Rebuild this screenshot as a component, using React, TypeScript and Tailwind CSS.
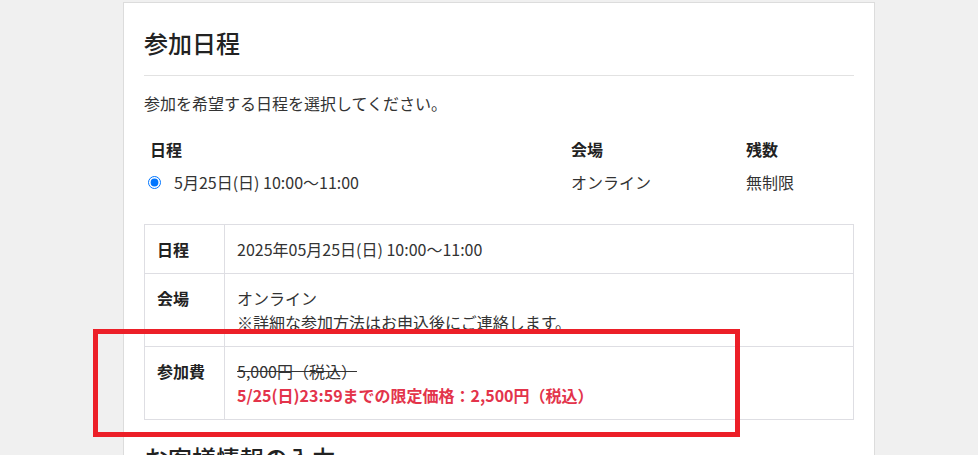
import React from "react";

const font = { fontFamily: '"Noto Sans CJK JP", "Noto Sans", sans-serif' };

export default function App() {
  return (
    <div className="relative h-[455px] w-[978px] overflow-hidden bg-[#f0f0f0]" style={font}>
      <div className="ml-[123px] mt-[2px] w-[752px] border border-[#dcdcdc] bg-white px-[20px] pt-[22px] text-[#333]">
        <h2 className="border-b border-[#e2e2e2] pb-[14px] text-[24px] leading-[36px] font-medium text-[#222]">
          参加日程
        </h2>
        <p className="mt-[15px] text-[16px] leading-[24px]">参加を希望する日程を選択してください。</p>

        <div className="mt-[22px] grid grid-cols-[421px_175px_1fr] text-[16px] leading-[24px]">
          <div className="pl-[6px] font-bold text-[#222]">日程</div>
          <div className="pl-[6px] font-bold text-[#222]">会場</div>
          <div className="pl-[6px] font-bold text-[#222]">残数</div>
          <div className="mt-[9px] flex items-center pl-[4px]">
            <input type="radio" checked readOnly className="m-0 h-[13px] w-[13px] accent-[#0075ff]" />
            <span className="ml-[13px]">5月25日(日) 10:00〜11:00</span>
          </div>
          <div className="mt-[9px] pl-[6px]">オンライン</div>
          <div className="mt-[9px] pl-[6px]">無制限</div>
        </div>

        <div className="mt-[30px] border border-[#dedee3] text-[16px] leading-[24px]">
          <div className="flex border-b border-[#dedee3]">
            <div className="w-[80px] shrink-0 border-r border-[#dedee3] p-[12px] font-bold text-[#222]">日程</div>
            <div className="p-[12px]">2025年05月25日(日) 10:00〜11:00</div>
          </div>
          <div className="flex border-b border-[#dedee3]">
            <div className="w-[80px] shrink-0 border-r border-[#dedee3] p-[12px] font-bold text-[#222]">会場</div>
            <div className="p-[12px]">
              <div>オンライン</div>
              <div>※詳細な参加方法はお申込後にご連絡します。</div>
            </div>
          </div>
          <div className="flex">
            <div className="w-[80px] shrink-0 border-r border-[#dedee3] p-[12px] font-bold text-[#222]">参加費</div>
            <div className="p-[12px]">
              <div className="line-through">5,000円（税込）</div>
              <div className="font-bold text-[#e3344b]">5/25(日)23:59までの限定価格：2,500円（税込）</div>
            </div>
          </div>
        </div>

        <h2 className="mt-[20px] text-[24px] leading-[36px] font-medium text-[#222]">お客様情報の入力</h2>
        <div className="h-[200px]" />
      </div>

      <div className="absolute left-[93px] top-[329px] h-[108px] w-[647px] border-[5px] border-[#ec1f28]" />
    </div>
  );
}
